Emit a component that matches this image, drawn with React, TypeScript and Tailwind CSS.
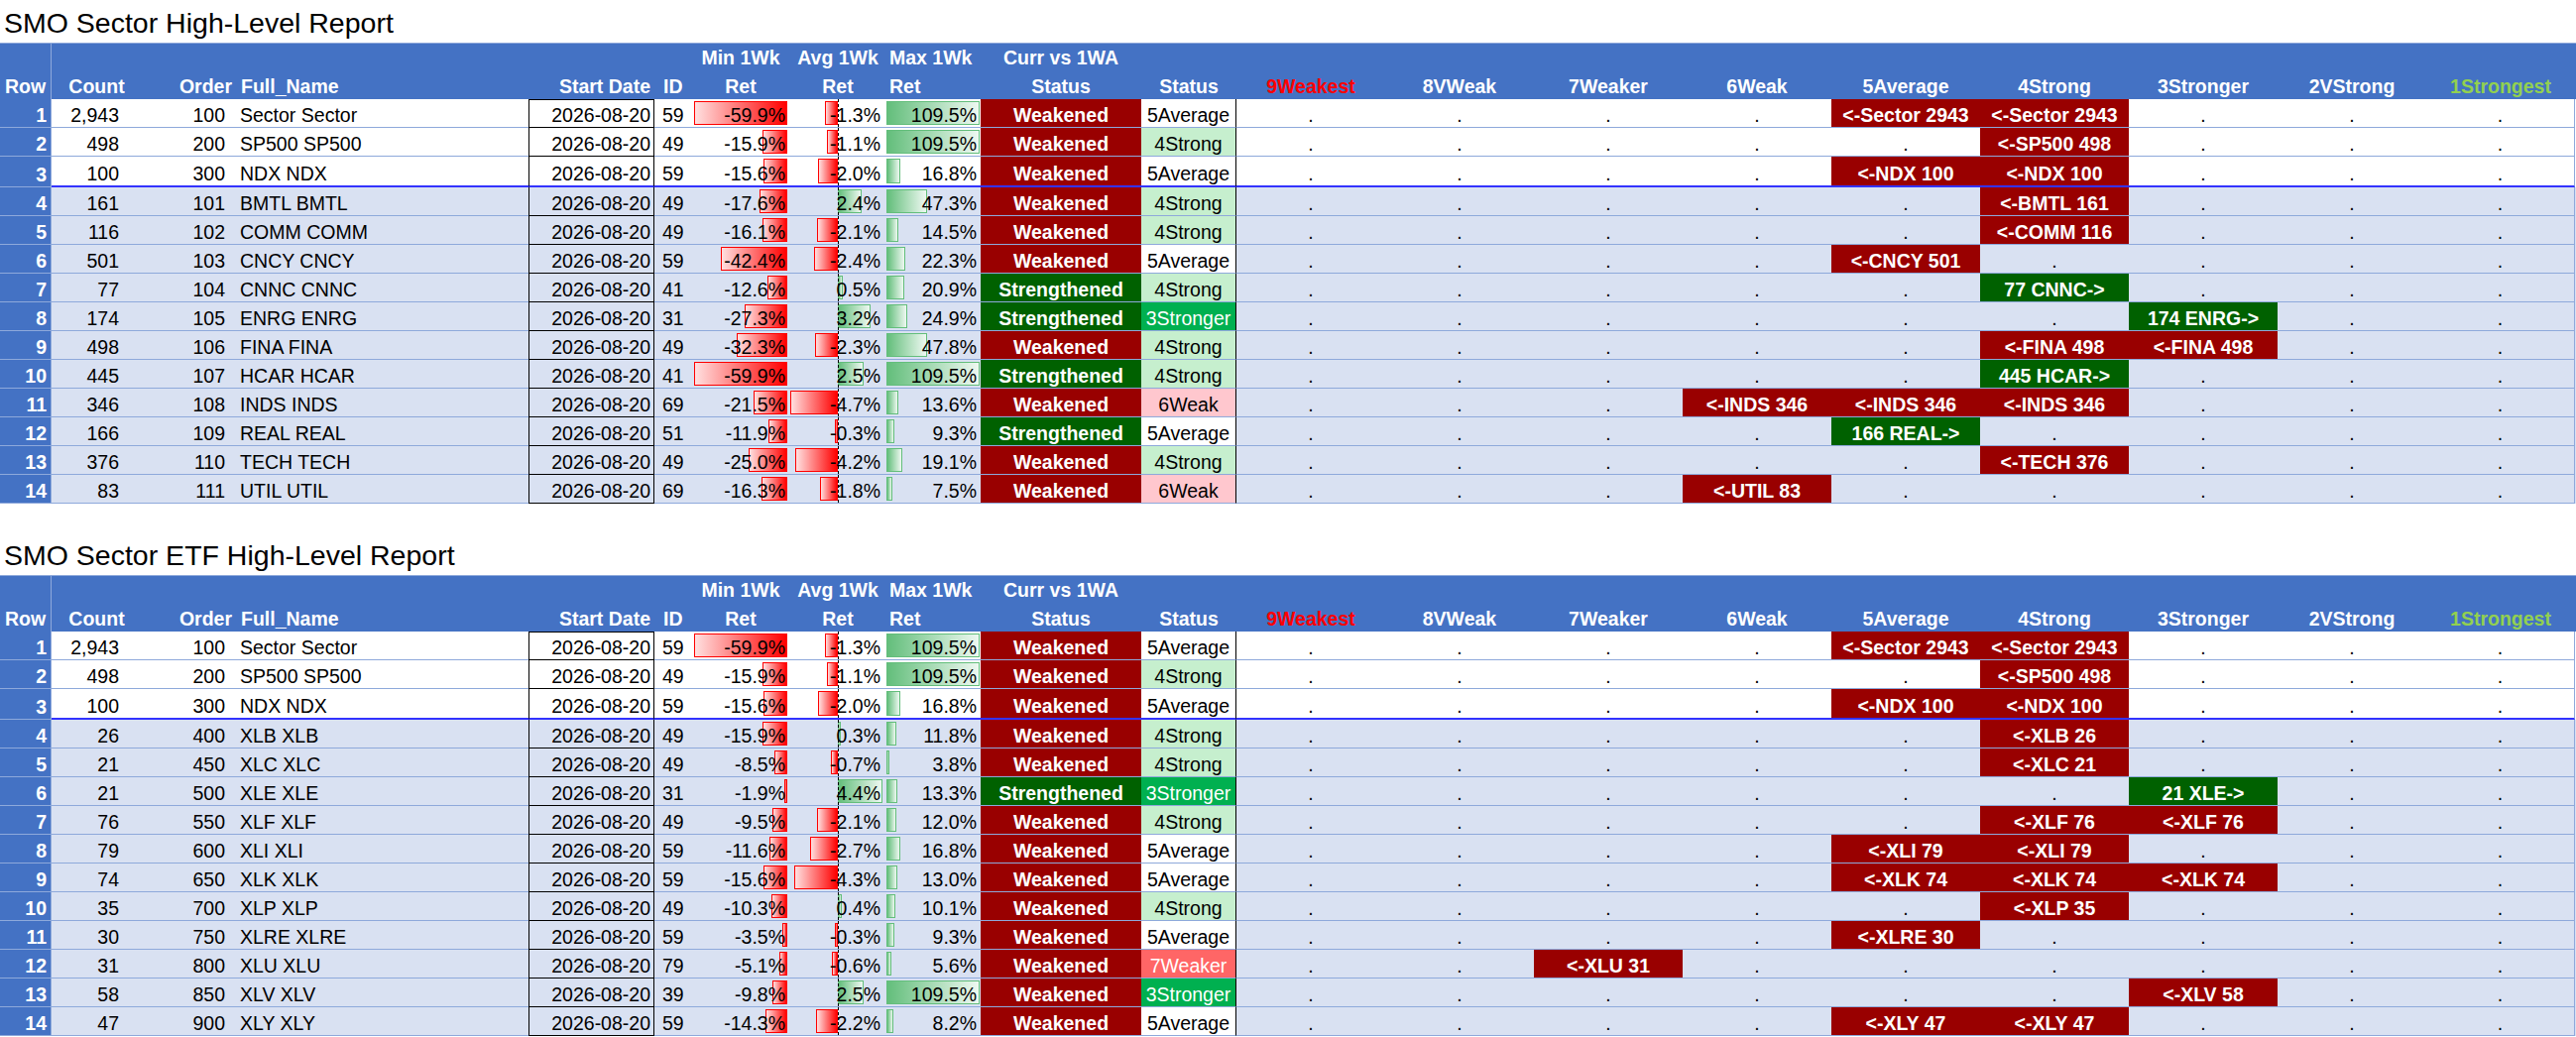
import React from 'react';

type Mark = [number, string, 'r' | 'g'];

type ReportRow = {
  count: string;
  order: number;
  name: string;
  id: number;
  min: number;
  avg: number;
  max: number;
  curr: 'Weakened' | 'Strengthened';
  status: string;
  marks: Mark[];
};

const COLS = 'grid grid-cols-[52px_91px_95px_295px_127px_37px_100px_96px_96px_162px_96px_repeat(9,150px)]';

const LEVELS = ['9Weakest', '8VWeak', '7Weaker', '6Weak', '5Average', '4Strong', '3Stronger', '2VStrong', '1Strongest'];

const statusClass: Record<string, string> = {
  '5Average': 'bg-white text-black',
  '4Strong': 'bg-[#C6EFCE] text-black',
  '3Stronger': 'bg-[#00B050] text-white',
  '6Weak': 'bg-[#FFC7CE] text-black',
  '7Weaker': 'bg-[#FF6666] text-white',
};

const topRows: ReportRow[] = [
  { count: '2,943', order: 100, name: 'Sector Sector', id: 59, min: -59.9, avg: -1.3, max: 109.5, curr: 'Weakened', status: '5Average', marks: [[4, '<-Sector 2943', 'r'], [5, '<-Sector 2943', 'r']] },
  { count: '498', order: 200, name: 'SP500 SP500', id: 49, min: -15.9, avg: -1.1, max: 109.5, curr: 'Weakened', status: '4Strong', marks: [[5, '<-SP500 498', 'r']] },
  { count: '100', order: 300, name: 'NDX NDX', id: 59, min: -15.6, avg: -2.0, max: 16.8, curr: 'Weakened', status: '5Average', marks: [[4, '<-NDX 100', 'r'], [5, '<-NDX 100', 'r']] },
];

const sectorRows: ReportRow[] = [
  ...topRows,
  { count: '161', order: 101, name: 'BMTL BMTL', id: 49, min: -17.6, avg: 2.4, max: 47.3, curr: 'Weakened', status: '4Strong', marks: [[5, '<-BMTL 161', 'r']] },
  { count: '116', order: 102, name: 'COMM COMM', id: 49, min: -16.1, avg: -2.1, max: 14.5, curr: 'Weakened', status: '4Strong', marks: [[5, '<-COMM 116', 'r']] },
  { count: '501', order: 103, name: 'CNCY CNCY', id: 59, min: -42.4, avg: -2.4, max: 22.3, curr: 'Weakened', status: '5Average', marks: [[4, '<-CNCY 501', 'r']] },
  { count: '77', order: 104, name: 'CNNC CNNC', id: 41, min: -12.6, avg: 0.5, max: 20.9, curr: 'Strengthened', status: '4Strong', marks: [[5, '77 CNNC->', 'g']] },
  { count: '174', order: 105, name: 'ENRG ENRG', id: 31, min: -27.3, avg: 3.2, max: 24.9, curr: 'Strengthened', status: '3Stronger', marks: [[6, '174 ENRG->', 'g']] },
  { count: '498', order: 106, name: 'FINA FINA', id: 49, min: -32.3, avg: -2.3, max: 47.8, curr: 'Weakened', status: '4Strong', marks: [[5, '<-FINA 498', 'r'], [6, '<-FINA 498', 'r']] },
  { count: '445', order: 107, name: 'HCAR HCAR', id: 41, min: -59.9, avg: 2.5, max: 109.5, curr: 'Strengthened', status: '4Strong', marks: [[5, '445 HCAR->', 'g']] },
  { count: '346', order: 108, name: 'INDS INDS', id: 69, min: -21.5, avg: -4.7, max: 13.6, curr: 'Weakened', status: '6Weak', marks: [[3, '<-INDS 346', 'r'], [4, '<-INDS 346', 'r'], [5, '<-INDS 346', 'r']] },
  { count: '166', order: 109, name: 'REAL REAL', id: 51, min: -11.9, avg: -0.3, max: 9.3, curr: 'Strengthened', status: '5Average', marks: [[4, '166 REAL->', 'g']] },
  { count: '376', order: 110, name: 'TECH TECH', id: 49, min: -25.0, avg: -4.2, max: 19.1, curr: 'Weakened', status: '4Strong', marks: [[5, '<-TECH 376', 'r']] },
  { count: '83', order: 111, name: 'UTIL UTIL', id: 69, min: -16.3, avg: -1.8, max: 7.5, curr: 'Weakened', status: '6Weak', marks: [[3, '<-UTIL 83', 'r']] },
];

const etfRows: ReportRow[] = [
  ...topRows,
  { count: '26', order: 400, name: 'XLB XLB', id: 49, min: -15.9, avg: 0.3, max: 11.8, curr: 'Weakened', status: '4Strong', marks: [[5, '<-XLB 26', 'r']] },
  { count: '21', order: 450, name: 'XLC XLC', id: 49, min: -8.5, avg: -0.7, max: 3.8, curr: 'Weakened', status: '4Strong', marks: [[5, '<-XLC 21', 'r']] },
  { count: '21', order: 500, name: 'XLE XLE', id: 31, min: -1.9, avg: 4.4, max: 13.3, curr: 'Strengthened', status: '3Stronger', marks: [[6, '21 XLE->', 'g']] },
  { count: '76', order: 550, name: 'XLF XLF', id: 49, min: -9.5, avg: -2.1, max: 12.0, curr: 'Weakened', status: '4Strong', marks: [[5, '<-XLF 76', 'r'], [6, '<-XLF 76', 'r']] },
  { count: '79', order: 600, name: 'XLI XLI', id: 59, min: -11.6, avg: -2.7, max: 16.8, curr: 'Weakened', status: '5Average', marks: [[4, '<-XLI 79', 'r'], [5, '<-XLI 79', 'r']] },
  { count: '74', order: 650, name: 'XLK XLK', id: 59, min: -15.6, avg: -4.3, max: 13.0, curr: 'Weakened', status: '5Average', marks: [[4, '<-XLK 74', 'r'], [5, '<-XLK 74', 'r'], [6, '<-XLK 74', 'r']] },
  { count: '35', order: 700, name: 'XLP XLP', id: 49, min: -10.3, avg: 0.4, max: 10.1, curr: 'Weakened', status: '4Strong', marks: [[5, '<-XLP 35', 'r']] },
  { count: '30', order: 750, name: 'XLRE XLRE', id: 59, min: -3.5, avg: -0.3, max: 9.3, curr: 'Weakened', status: '5Average', marks: [[4, '<-XLRE 30', 'r']] },
  { count: '31', order: 800, name: 'XLU XLU', id: 79, min: -5.1, avg: -0.6, max: 5.6, curr: 'Weakened', status: '7Weaker', marks: [[2, '<-XLU 31', 'r']] },
  { count: '58', order: 850, name: 'XLV XLV', id: 39, min: -9.8, avg: 2.5, max: 109.5, curr: 'Weakened', status: '3Stronger', marks: [[6, '<-XLV 58', 'r']] },
  { count: '47', order: 900, name: 'XLY XLY', id: 59, min: -14.3, avg: -2.2, max: 8.2, curr: 'Weakened', status: '5Average', marks: [[4, '<-XLY 47', 'r'], [5, '<-XLY 47', 'r']] },
];

function pct(value: number) {
  return `${value.toFixed(1)}%`;
}

const cell = 'relative flex items-end whitespace-nowrap leading-[24px]';

function HeadCell({ top, label, align, className = '' }: { top?: string; label: string; align: string; className?: string }) {
  return (
    <div className={`flex flex-col justify-end whitespace-nowrap ${align} ${className}`}>
      {top ? <div className="mb-[4px] leading-[25px]">{top}</div> : null}
      <div className="leading-[25px]">{label}</div>
    </div>
  );
}

function HeaderRow() {
  return (
    <div className={`${COLS} h-[57px] border-t border-[#8EA9DB] bg-[#4472C4] font-bold text-white`}>
      <HeadCell label="Row" align="items-center" className="border-r border-[#8EA9DB]" />
      <HeadCell label="Count" align="items-center" />
      <HeadCell label="Order" align="items-end pr-[4px]" />
      <HeadCell label="Full_Name" align="items-start pl-[5px]" />
      <HeadCell label="Start Date" align="items-end pr-[4px]" />
      <HeadCell label="ID" align="items-start pl-[9px]" />
      <HeadCell top="Min 1Wk" label="Ret" align="items-center" />
      <HeadCell top="Avg 1Wk" label="Ret" align="items-center" />
      <HeadCell top="Max 1Wk" label="Ret" align="items-start pl-[4px]" />
      <HeadCell top="Curr vs 1WA" label="Status" align="items-center" />
      <HeadCell label="Status" align="items-center" />
      {LEVELS.map((level, index) => (
        <HeadCell
          key={level}
          label={level}
          align="items-center"
          className={index === 0 ? 'text-[#FF0000]' : index === 8 ? 'text-[#92D050]' : ''}
        />
      ))}
    </div>
  );
}

function DataRow({ row, n }: { row: ReportRow; n: number }) {
  const band = n <= 3 ? 'bg-white' : 'bg-[#D9E1F2]';
  const line = n === 3 ? 'border-b-2 border-b-[#3333FF]' : 'border-b border-b-[#8EA9DB]';
  const height = n === 3 ? 'h-[31px]' : 'h-[29px]';
  const minWidth = (Math.abs(row.min) / 59.9) * 94;
  const avgWidth = Math.abs(row.avg) * 10.2;
  const maxWidth = (row.max / 109.5) * 94;

  return (
    <div className={`${COLS} ${height} ${band}`}>
      <div className={`${cell} justify-end border-r border-b border-[#8EA9DB] bg-[#4472C4] pr-[4px] font-bold text-white`}>{n}</div>
      <div className={`${cell} ${line} justify-end pr-[23px]`}>{row.count}</div>
      <div className={`${cell} ${line} justify-end pr-[11px]`}>{row.order}</div>
      <div className={`${cell} ${line} pl-[4px]`}>{row.name}</div>
      <div
        className={`${cell} ${n === 3 ? 'border-b-2 border-b-[#3333FF]' : 'border-b border-b-black'} ${n === 1 ? 'border-t border-t-black' : ''} justify-end border-x border-x-black pr-[3px]`}
      >
        2026-08-20
      </div>
      <div className={`${cell} ${line} pl-[8px]`}>{row.id}</div>

      <div className={`${cell} ${line} justify-end pr-[5px]`}>
        <div
          className="absolute top-[2px] bottom-[2px] right-[3px] border border-[#FF0000] bg-[linear-gradient(to_right,#FFE0E0,#FF0000)]"
          style={{ width: minWidth }}
        />
        <span className="relative">{pct(row.min)}</span>
      </div>

      <div className={`${cell} ${line} justify-end pr-[5px]`}>
        {row.avg < 0 ? (
          <div
            className="absolute top-[2px] bottom-[2px] right-[48px] border border-[#FF0000] bg-[linear-gradient(to_right,#FFE0E0,#FF0000)]"
            style={{ width: avgWidth }}
          />
        ) : (
          <div
            className="absolute top-[2px] bottom-[2px] left-[48px] border border-[#63BE7B] bg-[linear-gradient(to_right,#63BE7B,#EEF8F1)]"
            style={{ width: avgWidth }}
          />
        )}
        <div className="absolute top-0 bottom-0 left-[48px] border-l border-dashed border-black" />
        <span className="relative">{pct(row.avg)}</span>
      </div>

      <div className={`${cell} ${line} justify-end pr-[4px]`}>
        <div
          className="absolute top-[2px] bottom-[2px] left-[1px] border border-[#63BE7B] bg-[linear-gradient(to_right,#63BE7B,#EEF8F1)]"
          style={{ width: maxWidth }}
        />
        <span className="relative">{pct(row.max)}</span>
      </div>

      <div
        className={`${cell} ${line} justify-center font-bold text-white ${row.curr === 'Weakened' ? 'bg-[#990000]' : 'bg-[#006100]'}`}
      >
        {row.curr}
      </div>
      <div className={`${cell} ${line} justify-center border-r border-r-black ${statusClass[row.status]}`}>{row.status}</div>

      {LEVELS.map((level, index) => {
        const mark = row.marks.find((m) => m[0] === index);
        const edge = index === 8 ? 'border-r border-r-[#8EA9DB]' : '';
        if (!mark) {
          return (
            <div key={level} className={`${cell} ${line} ${edge} justify-center`}>
              .
            </div>
          );
        }
        return (
          <div
            key={level}
            className={`${cell} ${line} ${edge} justify-center font-bold text-white ${mark[2] === 'r' ? 'bg-[#990000]' : 'bg-[#006100]'}`}
          >
            {mark[1]}
          </div>
        );
      })}
    </div>
  );
}

function Report({ title, rows, titleHeight }: { title: string; rows: ReportRow[]; titleHeight: string }) {
  return (
    <section>
      <div className={`flex items-end pb-[6px] pl-[4px] text-[28.5px] leading-none ${titleHeight}`}>{title}</div>
      <HeaderRow />
      {rows.map((row, index) => (
        <DataRow key={row.order} row={row} n={index + 1} />
      ))}
    </section>
  );
}

export default function App() {
  return (
    <div className="w-[2598px] bg-white font-['Liberation_Sans',Arial,sans-serif] text-[19.5px] text-black">
      <Report title="SMO Sector High-Level Report" rows={sectorRows} titleHeight="h-[43px]" />
      <Report title="SMO Sector ETF High-Level Report" rows={etfRows} titleHeight="h-[72px]" />
    </div>
  );
}
